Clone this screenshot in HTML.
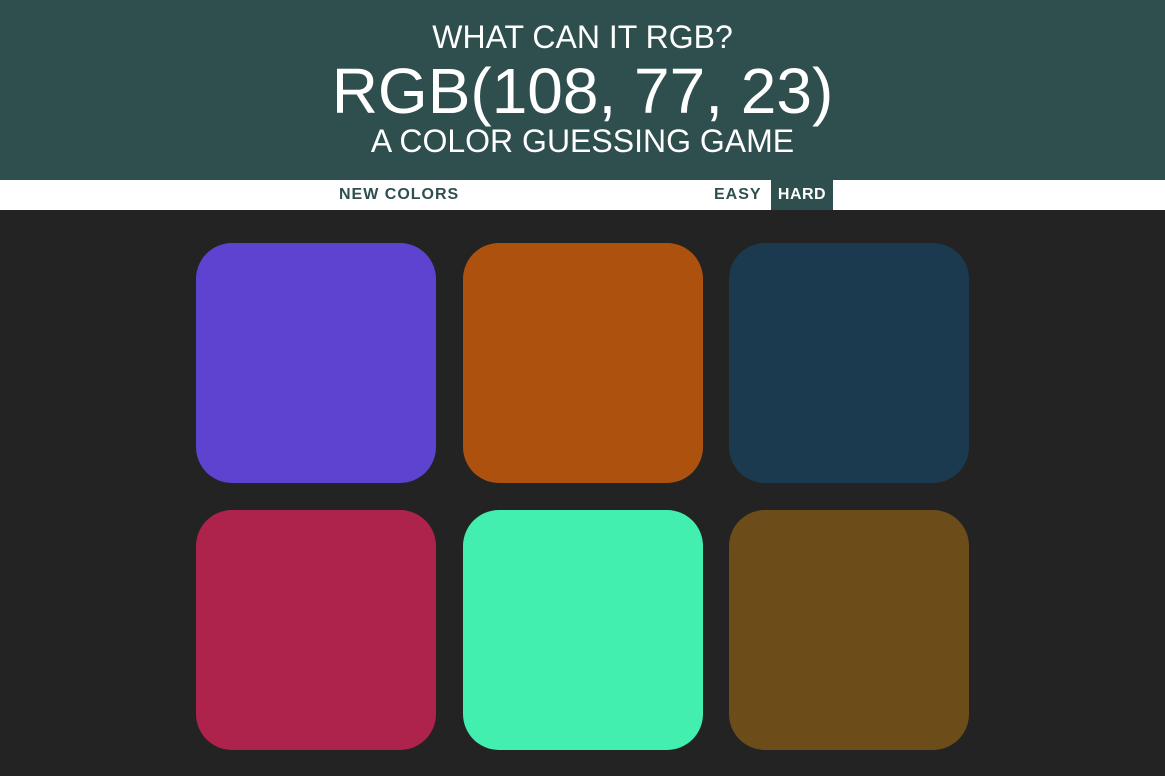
<!DOCTYPE html>
<html><head><style>
html,body{margin:0;padding:0;width:1165px;height:776px;background:#232323;overflow:hidden;font-family:"Liberation Sans",Arial,sans-serif}
.h{position:absolute;left:0;top:0;width:1165px;height:180px;background:#2f4f4f;color:#fff;text-align:center}
.h div{position:absolute;left:0;width:100%;white-space:nowrap}
.nav{position:absolute;left:0;top:180px;width:1165px;height:30px;background:#fff}
.nav span{position:absolute;top:0;height:30px;line-height:29px;font-weight:bold;font-size:16px;letter-spacing:1px;color:#2f4f4f}
.sq{position:absolute;width:240px;height:240px;border-radius:15%}
</style></head><body>
<div class="h">
<div style="top:17px;font-size:32px;line-height:40px">WHAT CAN IT RGB?</div>
<div style="top:56px;font-size:64px;line-height:70px">RGB(108, 77, 23)</div>
<div style="top:121px;font-size:32px;line-height:40px">A COLOR GUESSING GAME</div>
</div>
<div class="nav">
<span style="left:339px">NEW COLORS</span>
<span style="left:714px">EASY</span>
<span style="left:771px;width:62px;background:#2f4f4f;color:#fff;text-align:center;letter-spacing:0.5px">HARD</span>
</div>
<div class="sq" style="left:196px;top:243px;background:#5e43d0"></div>
<div class="sq" style="left:463px;top:243px;background:#ad520e"></div>
<div class="sq" style="left:729px;top:243px;background:#1b394f"></div>
<div class="sq" style="left:196px;top:510px;background:#ad234b"></div>
<div class="sq" style="left:463px;top:510px;background:#42efaf"></div>
<div class="sq" style="left:729px;top:510px;background:#6c4d1a"></div>
</body></html>
